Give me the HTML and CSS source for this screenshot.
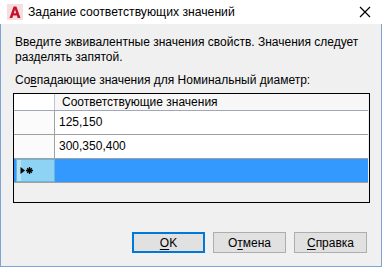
FILE: index.html
```html
<!DOCTYPE html>
<html lang="ru">
<head>
<meta charset="utf-8">
<link rel="stylesheet" href="styles.css">
</head>
<body>
<div class="window">
  <div class="titlebar">
    <div class="app-icon">
      <svg width="16" height="16" viewBox="0 0 16 16">
        <rect width="16" height="16" fill="#f6dede"/>
        <path d="M2.5 14 L6.6 2.5 H9.4 L13.5 14 H10.7 L9.9 11.4 H6.1 L5.3 14 Z M6.8 9.2 H9.2 L8 5.4 Z" fill="#c8102e"/>
      </svg>
    </div>
    <div class="title">Задание соответствующих значений</div>
    <div class="close">
      <svg width="12" height="12" viewBox="0 0 12 12"><path d="M1 1 L11 11 M11 1 L1 11" stroke="#000" stroke-width="1.2"/></svg>
    </div>
  </div>
  <div class="content">
    <p class="desc">Введите эквивалентные значения свойств. Значения следует разделять запятой.</p>
    <p class="label">Со<u>в</u>падающие значения для Номинальный диаметр:</p>
    <div class="grid">
      <div class="row head">
        <div class="rh"></div>
        <div class="cell">Соответствующие значения</div>
      </div>
      <div class="row">
        <div class="rh"></div>
        <div class="cell">125,150</div>
      </div>
      <div class="row">
        <div class="rh"></div>
        <div class="cell">300,350,400</div>
      </div>
      <div class="row sel">
        <div class="rh">
          <svg class="marker" width="14" height="9" viewBox="0 0 14 9">
            <path d="M0.5 1 L5 4.5 L0.5 8 Z" fill="#000"/>
            <path d="M6 4.5 H13 M9.5 1 V8 M7.2 2.2 L11.8 6.8 M11.8 2.2 L7.2 6.8" stroke="#000" stroke-width="1.3"/>
          </svg>
        </div>
        <div class="cell"></div>
      </div>
    </div>
    <div class="buttons">
      <div class="btn default"><u>O</u>K</div>
      <div class="btn">О<u>т</u>мена</div>
      <div class="btn"><u>С</u>правка</div>
    </div>
  </div>
</div>
</body>
</html>
```
FILE: styles.css
```css
* { box-sizing: border-box; }
html, body { margin: 0; padding: 0; background: #f0f0f0; }
body { font-family: "Liberation Sans", Arial, sans-serif; font-size: 12px; color: #000; }
.window {
  width: 382px; height: 267px;
  background: #f0f0f0;
  border: 1px solid #7fa2d6;
  border-top: none;
  display: flex; flex-direction: column;
}
.titlebar {
  height: 24px; background: #fff;
  display: flex; align-items: center;
  margin: 0 -1px;
  padding-left: 7px;
}
.app-icon { width: 16px; height: 16px; display: flex; }
.title { margin-left: 5px; font-size: 12.2px; line-height: 24px; flex: 1; }
.close { width: 35px; height: 24px; display: flex; align-items: center; justify-content: center; }
.content { padding: 11px 13px 0 12px; flex: 1; display: flex; flex-direction: column; }
.desc { margin: 0 0 0 2px; line-height: 15px; width: 350px; }
.label { margin: 8px 0 0 2px; line-height: 15px; }
u { text-decoration: underline; text-underline-offset: 2px; }
.grid {
  margin-top: 5px;
  width: 357px; height: 110px;
  border: 1px solid #000;
  background: #f0f0f0;
  display: flex; flex-direction: column;
}
.row { display: flex; height: 24px; border-bottom: 1px solid #a0a0a0; background: #fff; margin-right: 1px; }
.row.head { height: 17px; background: #f7f7f7; border-bottom: 1px solid #a0a8b8; }
.rh { width: 41px; border-right: 1px solid #a0a0a0; background: #fbfbfb; }
.head .rh { background: #fff; border-right: 1px solid #c0c4cc; }
.cell { flex: 1; padding-left: 4px; line-height: 23px; white-space: nowrap; }
.head .cell { padding-left: 7px; line-height: 16px; }
.sel { background: #3399ff; }
.sel .cell { background: #3399ff; }
.sel .rh {
  margin-left: 2px; width: 39px;
  background: linear-gradient(to right, #b5e3f8 0, #b5e3f8 4px, #8fd3f4 4px);
  border: 1px solid #6bb6dc;
  display: flex; align-items: center; padding-left: 3px;
}
.marker { display: block; }
.buttons { display: flex; justify-content: flex-end; gap: 8px; margin-top: 29px; padding-right: 1px; }
.btn {
  width: 73px; height: 21px;
  background: #e1e1e1; border: 1px solid #adadad;
  display: flex; align-items: center; justify-content: center;
  font-size: 12px;
}
.btn.default { border: 2px solid #0078d7; }
```
